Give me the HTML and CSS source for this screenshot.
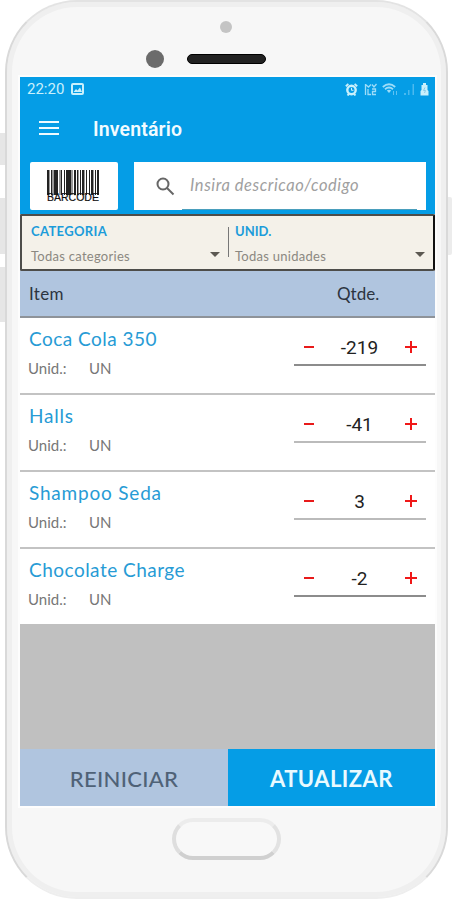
FILE: index.html
```html
<!DOCTYPE html>
<html lang="pt-BR">
<head>
    <meta charset="UTF-8">
    <meta name="viewport" content="width=device-width, initial-scale=1.0">
    <title>Inventário</title>
    <link rel="stylesheet" href="styles.css">
</head>
<body>
<div class="stage">
    <!-- Side buttons -->
    <div class="side-button mute"></div>
    <div class="side-button volume-up"></div>
    <div class="side-button volume-down"></div>
    <div class="side-button power"></div>

    <div class="phone">
        <div class="phone-top">
            <div class="sensor"></div>
            <div class="camera"></div>
            <div class="speaker"></div>
        </div>

        <div class="screen">
            <div class="status-bar">
                <span class="time">22:20</span>
                <svg class="picture-icon" width="13" height="12" viewBox="0 0 13 12">
                    <rect x="1" y="1" width="11" height="10" rx="1" fill="none" stroke="#c9f0fc" stroke-width="2"/>
                    <path d="M2.500 9 L5 6 L6.500 7.500 L9 4.500 L11 9 Z" fill="#c9f0fc"/>
                </svg>
                <div class="status-icons">
                    <svg width="13" height="13" viewBox="0 0 13 13" fill="none" stroke="#c9f0fc">
                        <circle cx="6.500" cy="7" r="4.200" stroke-width="2.400"/>
                        <path d="M.8 3.200 L3.400 1 M9.600 1 L12.200 3.200 M2.500 12.500 L4 11 M9 11 L10.500 12.500" stroke-width="1.800"/>
                        <path d="M6.500 4.800 V7.300 H8.500" stroke-width="1"/>
                    </svg>
                    <svg width="13" height="13" viewBox="0 0 13 13" fill="none" stroke="#9ddcf8">
                        <path d="M1.500 1 V12 M1.500 1.500 L4.500 4 L7 1.500 M8 1.500 L10 4 L12.500 1 M4 6 V11.500 H7 M8 6 H11.500 V8.500 H8.500 V11.500 H12" stroke-width="1.300"/>
                    </svg>
                    <svg width="16" height="13" viewBox="0 0 16 13" fill="none" stroke="#9ddcf8">
                        <path d="M.8 4 Q7 -1.500 13.200 4 M3 6.300 Q7 2.800 11 6.300" stroke-width="1.800"/>
                        <path d="M4.800 7.500 Q7 5.800 9.200 7.500 L7 10 Z" fill="#9ddcf8" stroke="none"/>
                        <path d="M11.500 8 V12 M14.500 8 V12" stroke="#5fc2f2"/>
                    </svg>
                    <svg width="12" height="13" viewBox="0 0 12 13" fill="#4bb9ef">
                        <path d="M1 10 h2 v2 h-2z M5 7 h1.500 v5 h-1.500z M9.500 1 h1.500 v11 h-1.500z"/>
                    </svg>
                    <svg width="9" height="13" viewBox="0 0 9 13">
                        <path d="M3 0 H6 V2 H7.500 V7 L8.500 8 V12.500 H.5 V8 L1.500 7 V2 H3 Z" fill="#c9f0fc"/>
                        <path d="M5 4.500 L3.500 7.500 H5.500 L4.500 10" fill="none" stroke="#8acbe9"/>
                    </svg>
                </div>
            </div>

            <header class="toolbar">
                <div class="menu-icon"><i></i><i></i><i></i></div>
                <h1>Inventário</h1>
            </header>

            <div class="search-row">
                <div class="barcode">
                    <svg width="54" height="25" viewBox="0 0 54 25" fill="#222">
                        <path d="M1 0h2v25h-2z M5 0h1v25h-1z M8 0h4v25h-4z M15 0h1v25h-1z M18 0h1v25h-1z M20 0h5v25h-5z M28 0h2v25h-2z M31 0h1v25h-1z M34 0h1v25h-1z M36 0h2v25h-2z M40 0h1v25h-1z M43 0h1v25h-1z M45 0h2v25h-2z M49 0h1v25h-1z M51 0h2v25h-2z"/>
                        <path d="M3 0h1v25h-1z M6 0h2v25h-2z M13 0h2v25h-2z M25 0h2v25h-2z M32 0h1v25h-1z M38 0h1v25h-1z M47 0h1v25h-1z" fill="#999"/>
                    </svg>
                    <span>BARCODE</span>
                </div>
                <div class="search">
                    <svg width="19" height="19" viewBox="0 0 19 19" fill="none" stroke="#666" stroke-width="2">
                        <circle cx="7" cy="7" r="5.500"/>
                        <path d="M11 11 L17.500 17.500"/>
                    </svg>
                    <span class="placeholder">Insira descricao/codigo</span>
                </div>
            </div>

            <div class="filters">
                <div class="filter">
                    <div class="filter-label">CATEGORIA</div>
                    <div class="filter-value"><span>Todas categories</span><b class="caret"></b></div>
                </div>
                <div class="filter">
                    <div class="filter-label unit">UNID.</div>
                    <div class="filter-value"><span>Todas unidades</span><b class="caret"></b></div>
                </div>
            </div>

            <div class="list-header">
                <span class="col-item">Item</span>
                <span class="col-qty">Qtde.</span>
            </div>

            <div class="list">
                <div class="row">
                    <div class="product">
                        <div class="name">Coca Cola 350</div>
                        <div class="unit-line"><span>Unid.:</span><span>UN</span></div>
                    </div>
                    <div class="stepper dark"><i class="minus"></i><span>-219</span><i class="plus"></i></div>
                </div>
                <div class="row">
                    <div class="product">
                        <div class="name wide">Halls</div>
                        <div class="unit-line"><span>Unid.:</span><span>UN</span></div>
                    </div>
                    <div class="stepper"><i class="minus"></i><span>-41</span><i class="plus"></i></div>
                </div>
                <div class="row">
                    <div class="product">
                        <div class="name wide">Shampoo Seda</div>
                        <div class="unit-line"><span>Unid.:</span><span>UN</span></div>
                    </div>
                    <div class="stepper"><i class="minus"></i><span>3</span><i class="plus"></i></div>
                </div>
                <div class="row">
                    <div class="product">
                        <div class="name">Chocolate Charge</div>
                        <div class="unit-line"><span>Unid.:</span><span>UN</span></div>
                    </div>
                    <div class="stepper dark"><i class="minus"></i><span>-2</span><i class="plus"></i></div>
                </div>
            </div>

            <div class="actions">
                <div class="action reset">REINICIAR</div>
                <div class="action update">ATUALIZAR</div>
            </div>
        </div>

        <div class="home-button"></div>
    </div>
</div>
</body>
</html>
```

FILE: styles.css
```css
* {
    box-sizing: border-box;
}

body {
    margin: 0;
    background: #fff;
    font-family: Lato, "Open Sans", sans-serif;
}

/* Phone frame */
.stage {
    position: relative;
    width: 452px;
    height: 900px;
    padding: 0 4px 0 5px;
    overflow: hidden;
}

.side-button {
    position: absolute;
    left: 0;
    width: 8px;
    background: #e6e6e6;
}

.mute {
    top: 133px;
    height: 32px;
}

.volume-up {
    top: 198px;
    height: 56px;
}

.volume-down {
    top: 267px;
    height: 55px;
}

.power {
    left: 444px;
    top: 197px;
    height: 58px;
    border-radius: 2px;
    background: #ececec;
}

.phone {
    position: relative;
    height: 899px;
    padding: 0 12px 0 13px;
    border: 2px solid #d9d9d9;
    border-top-color: #e3e3e3;
    border-bottom-color: #eee;
    border-radius: 72px;
    background: #f7f7f7;
    box-shadow: inset 0 0 0 5px #efefef;
}

.phone-top {
    position: relative;
    height: 75px;
}

.sensor,
.camera,
.speaker {
    position: absolute;
}

.sensor {
    left: 200px;
    top: 19px;
    width: 12px;
    height: 12px;
    border-radius: 50%;
    background: #c4c4c4;
}

.camera {
    left: 126px;
    top: 48px;
    width: 18px;
    height: 18px;
    border-radius: 50%;
    background: #6b6b6b;
}

.speaker {
    left: 167px;
    top: 52px;
    width: 79px;
    height: 10px;
    border-radius: 5px;
    border: 1px solid #000;
    background: #222;
}

.screen {
    display: flex;
    flex-direction: column;
    width: 415px;
    height: 729px;
    background: #c0c0c0;
    box-shadow: 0 0 0 2px #fdfdfd;
}

/* Status bar and toolbar */
.status-bar {
    display: flex;
    align-items: center;
    height: 24px;
    padding: 0 6px 0 7px;
    background: #059de6;
    color: #c9f0fc;
    font: 15px Roboto, sans-serif;
}

.picture-icon {
    margin-left: 7px;
}

.status-icons {
    display: flex;
    gap: 5px;
    margin-left: auto;
}

.status-icons svg:first-child {
    margin-right: 1px;
}

.toolbar {
    display: flex;
    align-items: center;
    height: 56px;
    padding-left: 19px;
    background: #059de6;
}

.menu-icon {
    display: flex;
    flex-direction: column;
    gap: 4px;
    width: 20px;
    margin-top: -2px;
}

.menu-icon i {
    height: 2px;
    background: #eefaff;
}

.toolbar h1 {
    margin: 2px 0 0 34px;
    color: #f2fbff;
    font: 600 19.500px/24px Roboto, sans-serif;
    letter-spacing: .15px;
}

.search-row {
    display: flex;
    gap: 16px;
    height: 57px;
    padding: 5px 9px 4px 10px;
    background: #059de6;
}

.barcode {
    display: flex;
    flex-direction: column;
    align-items: center;
    width: 88px;
    height: 48px;
    padding: 8px 2px 0 0;
    border-radius: 2px;
    background: #fff;
}

.barcode svg {
    flex: none;
}

.barcode span {
    margin-top: -3px;
    color: #111;
    font: 10.500px/11px "Liberation Sans", sans-serif;
    -webkit-text-stroke: .2px #111;
}

.search {
    display: flex;
    align-items: center;
    width: 292px;
    height: 48px;
    padding-left: 22px;
    background: linear-gradient(#4a9fbd, #4a9fbd) 48px 100% / 235px 1px no-repeat #fff;
}

.placeholder {
    margin: -2px 0 0 15px;
    color: #a0a0a0;
    font-size: 16.500px;
    font-style: italic;
    letter-spacing: .55px;
}

/* Filters */
.filters {
    display: flex;
    height: 57px;
    border: 2px solid #4d4d4a;
    border-right-color: #111;
    border-radius: 2px;
    background: #f4f1e9;
}

.filter {
    width: 206px;
    padding: 7px 0 0 9px;
}

.filter + .filter {
    width: 205px;
    padding-left: 7px;
    background: linear-gradient(#777, #777) 0 11px / 1px 30px no-repeat;
}

.filter-label {
    color: #1c9cda;
    font-size: 13px;
    font-weight: bold;
    line-height: 16px;
    letter-spacing: .35px;
}

.filter-label.unit {
    letter-spacing: 0;
}

.filter-value {
    display: flex;
    align-items: center;
    justify-content: space-between;
    margin-top: 8px;
    padding-right: 8px;
    color: #8b8881;
    font-size: 13px;
    line-height: 18px;
    letter-spacing: .27px;
}

.caret {
    border: 5px solid transparent;
    border-top-color: #5c5952;
    border-bottom: 0;
    margin-top: -3px;
}

/* Item list */
.list-header {
    display: flex;
    align-items: center;
    height: 47px;
    border-bottom: 2px solid #8e9399;
    background: #b0c5df;
    color: #2c3440;
    font-size: 17px;
}

.col-item {
    width: 317px;
    padding-left: 9px;
    letter-spacing: .3px;
}

.row {
    display: flex;
    justify-content: space-between;
    height: 77px;
    padding-right: 9px;
    border-bottom: 2px solid #c3c3c3;
    background: #fff;
}

.row:last-child {
    height: 75px;
    border-bottom: 0;
}

.product {
    padding: 9px 0 0 8px;
}

.name {
    padding-left: 1px;
    color: #279bd5;
    font-size: 19px;
    line-height: 23px;
    letter-spacing: .48px;
}

.name.wide {
    letter-spacing: .8px;
}

.unit-line {
    display: flex;
    margin-top: 8px;
    color: #777;
    font-size: 15px;
    line-height: 20px;
}

.unit-line span:first-child {
    width: 61px;
}

.stepper {
    display: flex;
    align-items: center;
    justify-content: space-between;
    width: 132px;
    height: 48px;
    padding: 12px 9px 0 10px;
    border-bottom: 2px solid #bbb;
    color: #222;
    font: 19px Roboto, sans-serif;
}

.stepper.dark {
    border-bottom-color: #8c8c8c;
}

.minus {
    width: 10px;
    height: 2px;
    background: #e81a1a;
}

.plus {
    width: 12px;
    height: 12px;
    background:
        linear-gradient(#f01818, #f01818) center / 12px 2px no-repeat,
        linear-gradient(#f01818, #f01818) center / 2px 12px no-repeat;
}

/* Bottom buttons */
.actions {
    display: flex;
    height: 57px;
    margin-top: auto;
}

.action {
    width: 208px;
    background: #b0c5df;
    color: #4f6277;
    font-size: 22px;
    font-weight: 500;
    line-height: 59px;
    letter-spacing: .3px;
    text-align: center;
}

.update {
    width: 207px;
    background: #059de6;
    color: #e9faff;
    font-weight: bold;
    letter-spacing: .45px;
}

.home-button {
    width: 109px;
    height: 42px;
    margin: 12px 0 0 152px;
    border: 4px solid #dedede;
    border-top-color: #ececec;
    border-right-color: #e2e2e2;
    border-bottom-color: #d0d0d0;
    border-radius: 21px;
    background: #f8f8f8;
}
```
